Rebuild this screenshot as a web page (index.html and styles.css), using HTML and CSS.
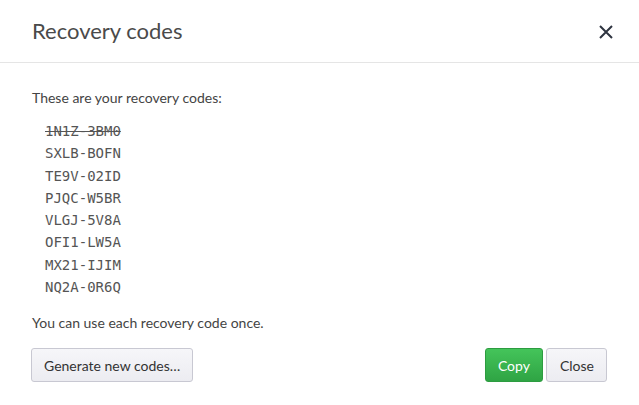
FILE: index.html
```html
<!DOCTYPE html>
<html>
<head>
<meta charset="utf-8">
<link rel="stylesheet" href="styles.css">
</head>
<body>
<div class="dialog">
  <header class="header">
    <h1 class="title">Recovery codes</h1>
    <button class="close-x" aria-label="Close">
      <svg width="14" height="14" viewBox="0 0 14 14"><path d="M1 1L13 13M13 1L1 13" stroke="#2e3440" stroke-width="2" fill="none"/></svg>
    </button>
  </header>
  <div class="content">
    <p class="intro">These are your recovery codes:</p>
    <ul class="codes">
      <li class="used">1N1Z-3BM0</li>
      <li>SXLB-BOFN</li>
      <li>TE9V-02ID</li>
      <li>PJQC-W5BR</li>
      <li>VLGJ-5V8A</li>
      <li>OFI1-LW5A</li>
      <li>MX21-IJIM</li>
      <li>NQ2A-0R6Q</li>
    </ul>
    <p class="note">You can use each recovery code once.</p>
    <div class="actions">
      <button class="btn">Generate new codes…</button>
      <div class="right">
        <button class="btn btn-primary">Copy</button>
        <button class="btn btn-close">Close</button>
      </div>
    </div>
  </div>
</div>
</body>
</html>
```
FILE: styles.css
```css
html, body {
  margin: 0;
  padding: 0;
  background: #fff;
}
body {
  font-family: Lato, "Open Sans", sans-serif;
  color: #444;
}
.dialog {
  width: 639px;
  height: 405px;
  box-sizing: border-box;
}
.header {
  display: flex;
  align-items: center;
  justify-content: space-between;
  padding: 16px 26px 16px 32px;
  border-bottom: 1px solid #e5e5e5;
}
.title {
  margin: 0;
  font-size: 22px;
  line-height: 30px;
  font-weight: 400;
  color: #4a4a4a;
}
.close-x {
  border: 0;
  background: none;
  padding: 0;
  width: 14px;
  height: 14px;
  display: flex;
  margin-top: 2px;
}
.content {
  padding: 25px 32px 0 32px;
}
.intro, .note {
  margin: 0;
  font-size: 14px;
  line-height: 20px;
  color: #444;
}
.codes {
  list-style: none;
  margin: 12px 0 15px 0;
  padding: 0 0 0 13px;
  font-family: "DejaVu Sans Mono", monospace;
  font-size: 14px;
  line-height: 22.3px;
  color: #555;
}
.used {
  text-decoration: line-through;
}
.actions {
  display: flex;
  justify-content: space-between;
  margin-top: 15px;
}
.right {
  display: flex;
  gap: 3px;
}
.btn {
  font-family: Lato, "Open Sans", sans-serif;
  font-size: 14px;
  height: 34px;
  padding: 0 12px;
  border: 1px solid #c8c8d2;
  border-radius: 3px;
  background: linear-gradient(#f6f6f9, #ececf1);
  color: #333;
}
.btn-close {
  padding: 0 12px 0 13px;
}
.actions > .btn {
  margin-left: -1px;
}
.btn-primary {
  background: linear-gradient(#44c45a, #2fa444);
  border-color: #2d9c40;
  color: #fff;
}
```
